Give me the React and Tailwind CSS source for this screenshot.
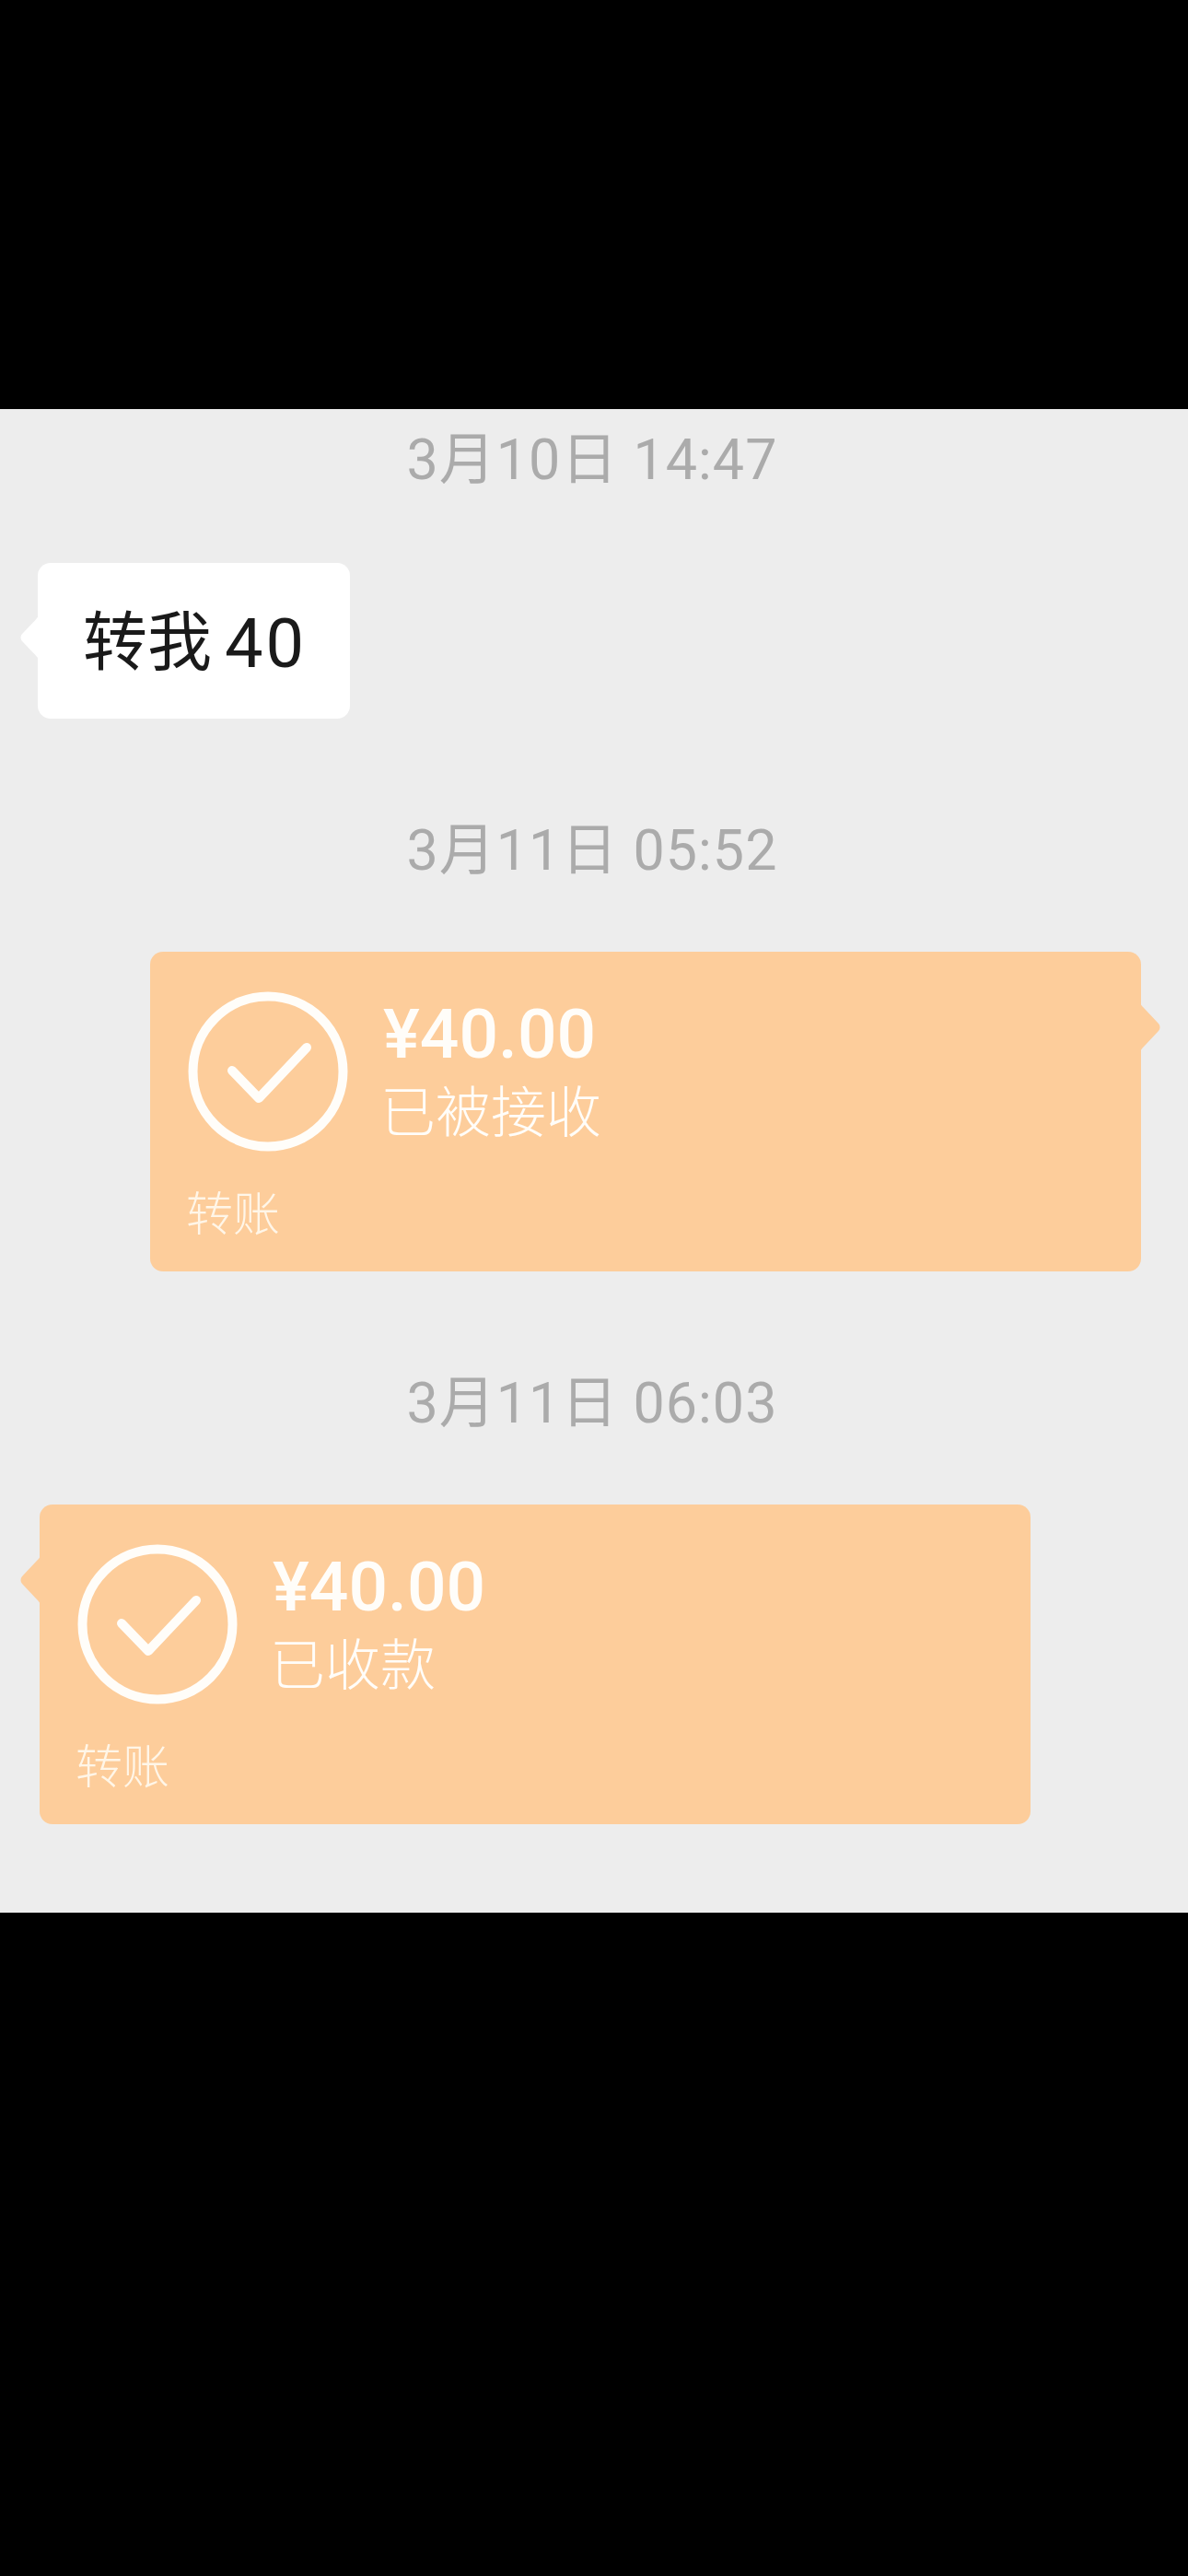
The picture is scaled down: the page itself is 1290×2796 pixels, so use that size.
const font = { fontFamily: '"Roboto","Noto Sans CJK SC",sans-serif' };

function Time({ children, className = "" }) {
  return (
    <div className={`h-[112px] flex items-center justify-center pr-[4px] text-[61px] font-normal text-[#ababab] tracking-[1px] whitespace-pre ${className}`}>
      {children}
    </div>
  );
}

function Tail({ side, color }) {
  const cls = side === "left" ? "absolute left-[-21px] top-[54px]" : "absolute right-[-21px] top-[54px] -scale-x-100";
  return (
    <svg className={cls} width="22" height="56" viewBox="0 0 22 56" fill={color}>
      <path d="M22 0 C22 3 20 5 18 7 L2 24 C0 26 0 30 2 32 L18 49 C20 51 22 53 22 56 Z" />
    </svg>
  );
}

function Check() {
  return (
    <svg width="174" height="176" viewBox="0 0 174 176" fill="none" stroke="#fffdf9" className="shrink-0">
      <circle cx="87" cy="88" r="81.5" strokeWidth="10" />
      <path d="M48 87 L77 117 L129 62" strokeWidth="10" strokeLinecap="round" strokeLinejoin="round" />
    </svg>
  );
}

function Transfer({ status, side, className = "" }) {
  return (
    <div className={`relative h-[347px] rounded-[14px] bg-[#fdcd9b] pl-[41px] pt-[42px] text-[#fffdf9] ${className}`}>
      <Tail side={side} color="#fdcd9b" />
      <div className="flex">
        <Check />
        <div className="ml-[38px] flex flex-col">
          <div className="mt-[9px] h-[76px] flex items-center text-[75px] font-medium leading-none">¥40.00</div>
          <div className="mt-[17px] -ml-[3px] h-[64px] flex items-center text-[60px] font-light leading-none">{status}</div>
        </div>
      </div>
      <div className="mt-[39px] -ml-[2px] h-[56px] flex items-center text-[51px] font-light leading-none text-[#fff6e8]">转账</div>
    </div>
  );
}

export default function App() {
  return (
    <div className="w-[1290px] h-[2796px] bg-black pt-[444px]" style={font}>
      <div className="h-[1632px] bg-[#ededed]">
        <Time>3月10日 14:47</Time>
        <div className="relative ml-[41px] mt-[55px] h-[169px] w-[339px] rounded-[14px] bg-white flex items-center pl-[49px] pt-[6px] text-[70px] text-[#1a1a1a] font-normal whitespace-pre">
          <svg className="absolute left-[-19px] top-[53px]" width="20" height="56" viewBox="0 0 22 56" fill="#ffffff">
            <path d="M22 0 C22 3 20 5 18 7 L2 24 C0 26 0 30 2 32 L18 49 C20 51 22 53 22 56 Z" />
          </svg>
          转我<span className="ml-[14px] text-[74px] tracking-[3px]">40</span>
        </div>
        <Time className="mt-[86px] pt-[3px]">3月11日 05:52</Time>
        <Transfer status="已被接收" side="right" className="mt-[55px] ml-[163px] w-[1076px]" />
        <Time className="mt-[86px] pt-[3px]">3月11日 06:03</Time>
        <Transfer status="已收款" side="left" className="mt-[55px] ml-[43px] w-[1076px]" />
      </div>
    </div>
  );
}
